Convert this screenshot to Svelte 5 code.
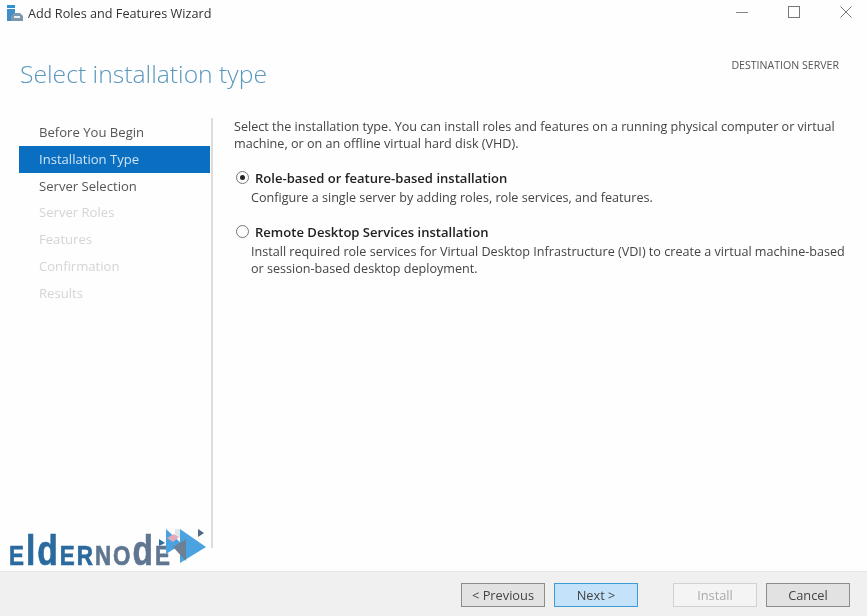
<script>
  const steps = [
    { label: 'Before You Begin', state: 'done' },
    { label: 'Installation Type', state: 'active' },
    { label: 'Server Selection', state: 'done' },
    { label: 'Server Roles', state: 'off' },
    { label: 'Features', state: 'off' },
    { label: 'Confirmation', state: 'off' },
    { label: 'Results', state: 'off' }
  ];

  const options = [
    {
      title: 'Role-based or feature-based installation',
      lines: ['Configure a single server by adding roles, role services, and features.'],
      checked: true
    },
    {
      title: 'Remote Desktop Services installation',
      lines: [
        'Install required role services for Virtual Desktop Infrastructure (VDI) to create a virtual machine-based',
        'or session-based desktop deployment.'
      ],
      checked: false
    }
  ];
</script>

<div class="window">
  <div class="titlebar">
    <svg class="app-icon" width="18" height="18" viewBox="0 0 18 18">
      <rect x="1" y="1" width="8" height="3" fill="#2f8fd0" />
      <rect x="1" y="5" width="8" height="12" fill="#3d8ec9" />
      <path d="M5 17v-5l3-3h6l3 3v5z" fill="#7e97ae" />
      <path d="M8 12h6v2H8z" fill="#e8eef3" />
    </svg>
    <span class="wintitle">Add Roles and Features Wizard</span>
    <div class="controls">
      <svg width="12" height="12" viewBox="0 0 12 12"><path d="M0 6.500h12" stroke="#888" fill="none" /></svg>
      <svg width="12" height="12" viewBox="0 0 12 12"><rect x="0.500" y="0.500" width="11" height="11" stroke="#777" fill="none" /></svg>
      <svg width="12" height="12" viewBox="0 0 12 12"><path d="M0.500 0.500l11 11M11.500 0.500l-11 11" stroke="#777" fill="none" /></svg>
    </div>
  </div>

  <header class="head">
    <h1>Select installation type</h1>
    <div class="dest">DESTINATION SERVER</div>
  </header>

  <div class="body">
    <nav class="steps">
      {#each steps as step}
        <div class="step {step.state}">{step.label}</div>
      {/each}
    </nav>

    <main class="content">
      <p class="intro">
        Select the installation type. You can install roles and features on a running physical computer or virtual<br />
        machine, or on an offline virtual hard disk (VHD).
      </p>

      {#each options as opt}
        <div class="option">
          <div class="opt-title">
            <span class="radio" class:checked={opt.checked}></span>
            <span>{opt.title}</span>
          </div>
          {#each opt.lines as line}
            <div class="opt-desc">{line}</div>
          {/each}
        </div>
      {/each}
    </main>
  </div>

  <footer class="foot">
    <button class="btn">&lt; Previous</button>
    <button class="btn primary">Next &gt;</button>
    <button class="btn disabled spaced">Install</button>
    <button class="btn">Cancel</button>
  </footer>

  <!-- watermark over the wizard -->
  <div class="logo">
    <div class="wordmark">
      <span class="blue">E<b>ld</b>ER</span><span class="slate">NO<b>d</b>E</span>
    </div>
    <svg class="mark" width="56" height="44" viewBox="0 0 56 44">
      <path d="M16 5l16 15-16 10z" fill="#4aa3e0" />
      <path d="M30 5l26 18-26 16z" fill="#4aa3e0" />
      <path d="M25 5h5v9l-5-4z" fill="#dfe6ea" />
      <path d="M17 14l7-4 5 3-6 5z" fill="#e4a9bb" />
      <path d="M23 23l13-8v22z" fill="#6d8095" />
      <path d="M48 5l6 4-6 4z" fill="#4f6a86" />
      <path d="M9 15l6 4-6 3z" fill="#2f6ea3" />
    </svg>
  </div>
</div>

<style>
  :global(body) {
    margin: 0;
    background: #fefefe;
  }

  .window {
    position: relative;
    width: 867px;
    height: 616px;
    display: flex;
    flex-direction: column;
    overflow: hidden;
    background: #fefefe;
    font-family: "Open Sans", "Noto Sans", sans-serif;
    font-size: 12.600px;
    color: #444;
    filter: blur(0.35px);
  }

  .titlebar {
    height: 26px;
    flex: none;
    display: flex;
    align-items: center;
    padding-left: 6px;
    gap: 4px;
  }

  .wintitle {
    font-size: 12.700px;
    color: #333;
  }

  .controls {
    margin-left: auto;
    display: flex;
    gap: 40px;
    padding-right: 15px;
    margin-top: -2px;
  }

  .head {
    height: 90px;
    flex: none;
    display: flex;
    justify-content: space-between;
    padding: 0 28px 0 20px;
    box-sizing: border-box;
  }

  h1 {
    margin: 30px 0 0;
    font-size: 24.700px;
    line-height: 36px;
    font-weight: 300;
    color: #5a97bf;
  }

  .dest {
    margin-top: 32px;
    font-size: 10.600px;
    line-height: 14px;
    color: #555;
  }

  .body {
    flex: 1;
    display: flex;
    min-height: 0;
  }

  .steps {
    width: 191px;
    margin-left: 19px;
    padding-top: 3px;
    flex: none;
  }

  .step {
    height: 26.800px;
    line-height: 26.800px;
    padding-left: 20px;
    font-size: 13.100px;
    color: #555;
  }

  .step.active {
    background: #0a6fc0;
    color: #cfe4f5;
  }

  .step.off {
    color: #d4d4d4;
  }

  .content {
    flex: 1;
    margin-left: 1px;
    margin-top: 2px;
    height: 430px;
    border-left: 2px solid #dcdcdc;
    padding: 0 0 0 21px;
    box-sizing: border-box;
  }

  .intro {
    margin: 0 0 15px;
    line-height: 17px;
  }

  .option {
    margin-bottom: 15px;
    padding-left: 17px;
    line-height: 17px;
  }

  .opt-title {
    position: relative;
    font-weight: 600;
    font-size: 13.050px;
    color: #222;
    line-height: 22px;
    padding-left: 4px;
  }

  .radio {
    position: absolute;
    left: -15px;
    top: 4px;
    width: 11px;
    height: 11px;
    border: 1px solid #777;
    border-radius: 50%;
    box-sizing: content-box;
  }

  .radio.checked::after {
    content: '';
    position: absolute;
    left: 3px;
    top: 3px;
    width: 5px;
    height: 5px;
    border-radius: 50%;
    background: #222;
  }

  .foot {
    height: 44px;
    flex: none;
    background: #f0f0f0;
    border-top: 1px solid #e6e6e6;
    display: flex;
    align-items: flex-start;
    justify-content: flex-end;
    gap: 9px;
    padding: 0 17px 0 0;
    box-sizing: content-box;
  }

  .btn {
    width: 84px;
    height: 24px;
    margin-top: 11px;
    padding: 0;
    border: 1px solid #8c8c8c;
    background: #e2e2e2;
    font-family: inherit;
    font-size: 12.800px;
    color: #444;
  }

  .btn.primary {
    background: #c4e3fa;
    border-color: #3f9ad8;
  }

  .btn.disabled {
    background: #f4f4f4;
    border-color: #d2d2d2;
    color: #aaa;
  }

  .btn.spaced {
    margin-left: 26px;
  }

  .logo {
    position: absolute;
    left: 9px;
    top: 524px;
    width: 200px;
    height: 44px;
  }

  .wordmark {
    position: absolute;
    left: 0;
    bottom: -2px;
    font-family: "Liberation Sans", sans-serif;
    font-weight: 700;
    font-size: 28px;
    line-height: 1;
    letter-spacing: 2.500px;
    white-space: nowrap;
    -webkit-text-stroke: 0.7px currentColor;
    transform: scaleX(0.8);
    transform-origin: left bottom;
  }

  .wordmark b {
    font-size: 42px;
    line-height: 0;
  }

  .blue {
    color: #2a6a9e;
  }

  .slate {
    color: #5f7690;
  }

  .mark {
    position: absolute;
    left: 141px;
    top: 0;
  }
</style>
